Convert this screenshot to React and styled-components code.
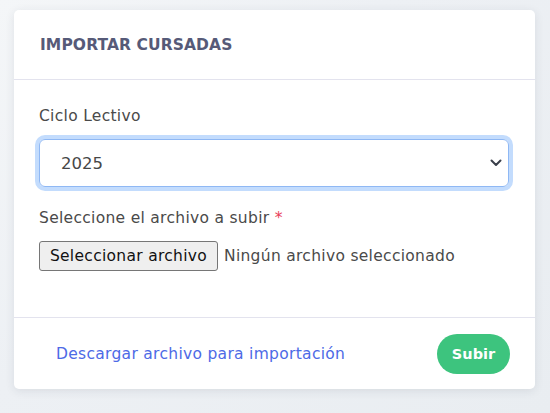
import React from 'react'
import styled, { createGlobalStyle } from 'styled-components'

const GlobalStyle = createGlobalStyle`
  html, body {
    margin: 0;
    padding: 0;
    background: #edf0f4;
    font-family: "DejaVu Sans", "Open Sans", sans-serif;
  }
`

const Page = styled.div`
  padding: 10px 15px 24px 14px;
  min-height: 413px;
  box-sizing: border-box;
  background: linear-gradient(135deg, #f4f6f8 0%, #edf0f4 40%, #e9edf1 100%);
`

const Card = styled.div`
  background: #fff;
  border-radius: 5px;
  box-shadow: 0 2px 10px rgba(40, 50, 70, 0.1);
`

const Header = styled.div`
  height: 69px;
  display: flex;
  align-items: center;
  padding: 0 26px;
  border-bottom: 1px solid #e3e3ee;
`

const Title = styled.h2`
  margin: 0;
  font-size: 15.5px;
  font-weight: 700;
  color: #565a78;
  letter-spacing: 0.1px;
`

const Body = styled.div`
  padding: 25px 26px 46px 25px;
  border-bottom: 1px solid #e3e3ee;
`

const Field = styled.div`
  margin-bottom: ${p => p.$gap || 0}px;
`

const Label = styled.div`
  font-size: 15.5px;
  letter-spacing: 0.3px;
  color: #4a4a4a;
  line-height: 22px;
  margin-bottom: ${p => p.$mb || 8}px;
`

const Req = styled.span`
  color: #e83e5a;
`

const SelectBox = styled.div`
  position: relative;
  height: 48px;
  box-sizing: border-box;
  border: 1px solid #8fb8f4;
  border-radius: 6px;
  box-shadow: 0 0 0 4px #c3dcfd;
  display: flex;
  align-items: center;
  padding: 0 21px;
  font-size: 16.5px;
  color: #474747;
`

const Chevron = styled.svg`
  position: absolute;
  right: 5px;
  top: 50%;
  margin-top: -5px;
`

const FileRow = styled.div`
  display: flex;
  align-items: center;
  gap: 6px;
`

const FileButton = styled.button`
  height: 30px;
  width: 179px;
  background: #efefef;
  border: 1px solid #767676;
  border-radius: 3px;
  font-family: inherit;
  font-size: 15.5px;
  letter-spacing: 0.3px;
  color: #111;
  padding: 0;
`

const FileName = styled.span`
  font-size: 15.5px;
  letter-spacing: 0.3px;
  color: #4a4a4a;
`

const Footer = styled.div`
  height: 71px;
  display: flex;
  align-items: center;
  justify-content: space-between;
  padding: 0 25px 0 42px;
`

const DownloadLink = styled.a`
  font-size: 15.5px;
  letter-spacing: 0.3px;
  font-weight: 500;
  color: #4d6ae6;
  text-decoration: none;
`

const SubmitButton = styled.button`
  width: 73px;
  height: 40px;
  border: none;
  border-radius: 20px;
  background: #3dc47e;
  color: #fff;
  font-family: inherit;
  font-size: 14.5px;
  font-weight: 700;
`

export default function App() {
  return (
    <>
      <GlobalStyle />
      <Page>
        <Card>
          <Header>
            <Title>IMPORTAR CURSADAS</Title>
          </Header>
          <Body>
            <Field $gap={20}>
              <Label $mb={12}>Ciclo Lectivo</Label>
              <SelectBox>
                2025
                <Chevron width="14" height="10" viewBox="0 0 14 10">
                  <path d="M2.5 2.5l4.5 4.5 4.5-4.5" fill="none" stroke="#3a3f4a" strokeWidth="2" strokeLinecap="round" strokeLinejoin="round" />
                </Chevron>
              </SelectBox>
            </Field>
            <Field>
              <Label $mb={12}>
                Seleccione el archivo a subir <Req>*</Req>
              </Label>
              <FileRow>
                <FileButton>Seleccionar archivo</FileButton>
                <FileName>Ningún archivo seleccionado</FileName>
              </FileRow>
            </Field>
          </Body>
          <Footer>
            <DownloadLink href="#">Descargar archivo para importación</DownloadLink>
            <SubmitButton>Subir</SubmitButton>
          </Footer>
        </Card>
      </Page>
    </>
  )
}
